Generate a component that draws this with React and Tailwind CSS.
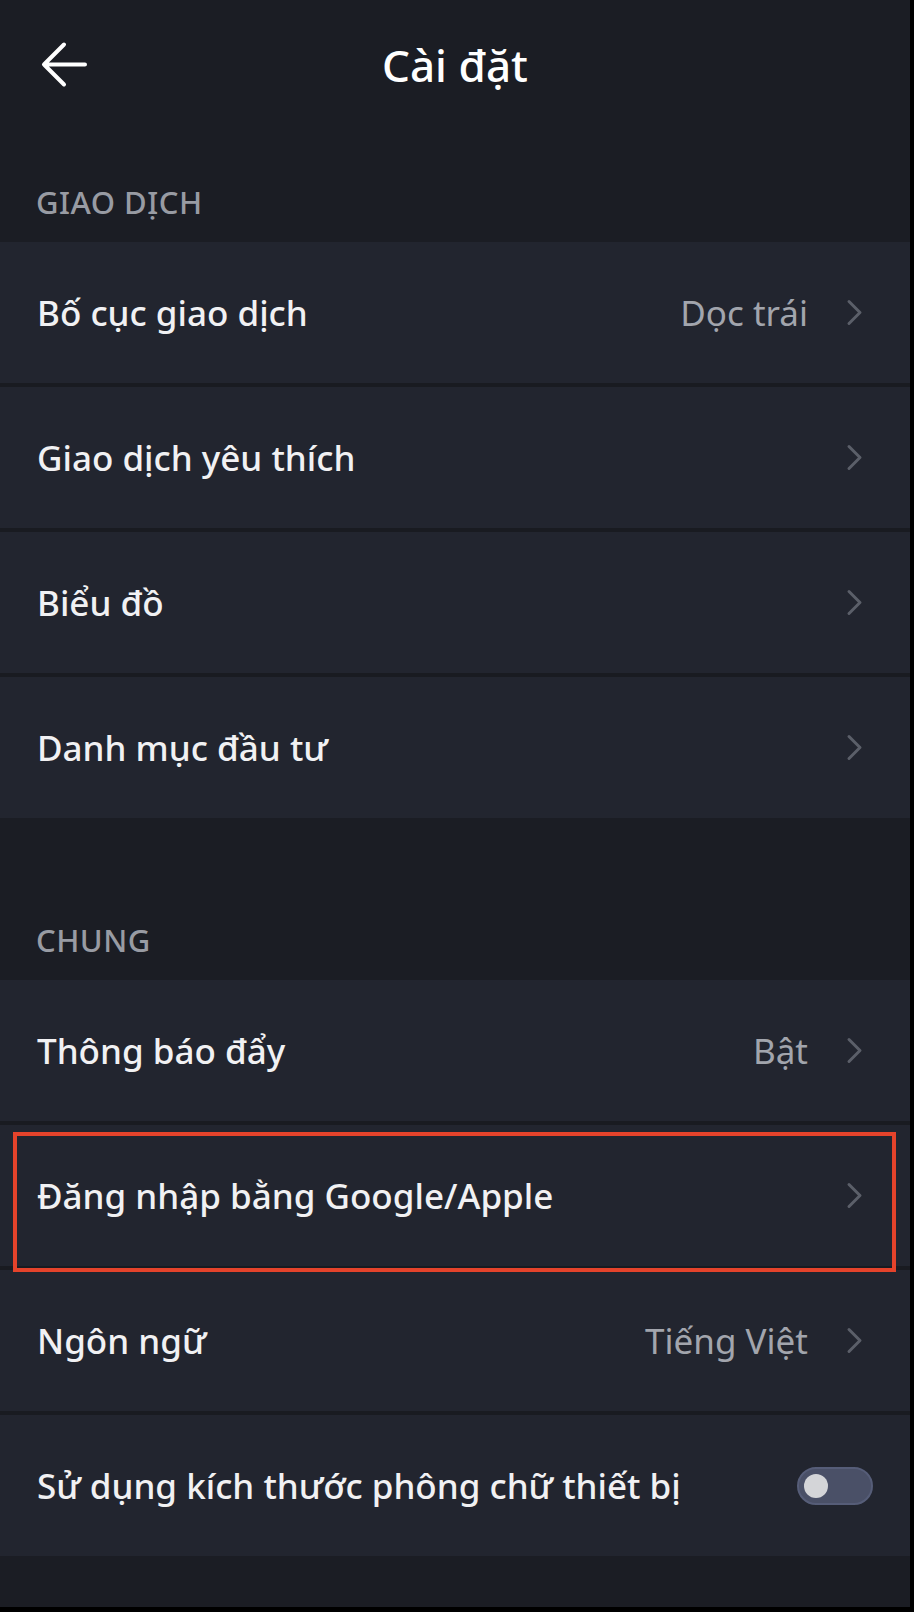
import React from 'react'

// Settings screen - dark theme list
const SECTIONS = [
  {
    title: 'GIAO DỊCH',
    gap: 'h-[112px]',
    rows: [
      { label: 'Bố cục giao dịch', value: 'Dọc trái' },
      { label: 'Giao dịch yêu thích' },
      { label: 'Biểu đồ' },
      { label: 'Danh mục đầu tư' },
    ],
  },
  {
    title: 'CHUNG',
    gap: 'h-[162px]',
    rows: [
      { label: 'Thông báo đẩy', value: 'Bật' },
      { label: 'Đăng nhập bằng Google/Apple', marked: true },
      { label: 'Ngôn ngữ', value: 'Tiếng Việt' },
      { label: 'Sử dụng kích thước phông chữ thiết bị', toggle: true },
    ],
  },
]

function Chevron() {
  return (
    <svg width="17" height="27" viewBox="0 0 17 27" fill="none">
      <polyline points="3,2.5 14,13.5 3,24.5" stroke="#5b5f69" strokeWidth="3" strokeLinecap="round" strokeLinejoin="round" />
    </svg>
  )
}

function Toggle() {
  return (
    <div className="w-[76px] h-[38px] rounded-full bg-[#4a5067] border-2 border-[#565d78] flex items-center pl-[5px]">
      <div className="w-[24px] h-[24px] rounded-full bg-[#d4d5d8]" />
    </div>
  )
}

function Row({ row }) {
  return (
    <div className="relative h-[141px] bg-[#22252f] flex items-center pl-[37px] pr-[47px]">
      <span className="flex-1 text-[35px] leading-none font-medium text-[#f1f1f3]">{row.label}</span>
      {row.value && (
        <span className="text-[35px] leading-none text-[#a2a5ad] mr-[38px]">{row.value}</span>
      )}
      {row.toggle ? <div className="-mr-[10px]"><Toggle /></div> : <Chevron />}
      {row.marked && (
        <div className="absolute z-10 top-[7px] left-[13px] w-[883px] h-[140px] border-4 border-[#e5432b] pointer-events-none" />
      )}
    </div>
  )
}

export default function App() {
  return (
    <div className="w-[914px] h-[1612px] bg-black pr-[4px] pb-[5px]" style={{ fontFamily: '"Noto Sans", "Open Sans", sans-serif' }}>
      <div className="w-[910px] h-[1607px] bg-[#1b1d24] flex flex-col">
        {/* header */}
        <div className="relative h-[130px] flex items-center justify-center">
          <button className="absolute left-[40px] top-[41px]">
            <svg width="47" height="47" viewBox="0 0 47 47" fill="none">
              <path d="M4 23.5 H45 M24 3.5 L4 23.5 L24 43.5" stroke="#ffffff" strokeWidth="4" strokeLinecap="round" strokeLinejoin="round" />
            </svg>
          </button>
          <h1 className="text-[44px] leading-none font-medium text-white">Cài đặt</h1>
        </div>

        {SECTIONS.map((section) => (
          <div key={section.title}>
            <div className={`${section.gap} flex items-end pl-[36px] pb-[25px]`}>
              <span className="text-[31px] leading-[30px] font-medium tracking-[0.5px] text-[#989ba3]">{section.title}</span>
            </div>
            <div className="flex flex-col gap-[4px] bg-[#191b21]">
              {section.rows.map((row) => (
                <Row key={row.label} row={row} />
              ))}
            </div>
          </div>
        ))}
      </div>
    </div>
  )
}
